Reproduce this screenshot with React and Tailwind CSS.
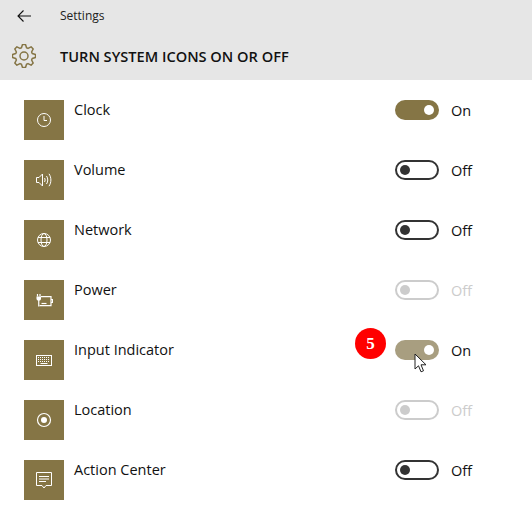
import React from "react";

const ClockIcon = () => (
  <svg width="16" height="16" viewBox="0 0 16 16" fill="none" stroke="#fff" strokeWidth="1">
    <circle cx="8" cy="8" r="6.5" />
    <path d="M8 4v4.5h3" />
  </svg>
);

const VolumeIcon = () => (
  <svg width="16" height="14" viewBox="0 0 16 14" fill="none" stroke="#fff" strokeWidth="1">
    <path d="M0.500 4.500h2.500L6.500 1v12L3 9.500H0.500z" />
    <path d="M8.500 5c.8 1.200.8 2.800 0 4" />
    <path d="M10.500 3c1.700 2.400 1.700 5.600 0 8" />
    <path d="M13 .8c2.500 3.700 2.500 8.700 0 12.400" />
  </svg>
);

const GlobeIcon = () => (
  <svg width="16" height="16" viewBox="0 0 16 16" fill="none" stroke="#fff" strokeWidth="1">
    <circle cx="8" cy="8" r="6.500" />
    <ellipse cx="8" cy="8" rx="3" ry="6.500" />
    <path d="M2 5.500h12M2 10.500h12" />
  </svg>
);

const PowerIcon = () => (
  <svg width="17" height="13" viewBox="0 0 17 13" fill="none" stroke="#fff" strokeWidth="1.200">
    <path d="M5 2.600h10v9H3.500" />
    <path d="M15 5.500h1.500v3H15" />
    <path d="M.5 2.500h4.500v2.300c0 1.200-1 2-2.250 2S.5 6 .5 4.800z" fill="#fff" stroke="none" />
    <path d="M1.500 0v2.500M4 0v2.500M2.750 6v6.500" />
    <path d="M5.500 9.500h5" />
  </svg>
);

const KeyboardIcon = () => (
  <svg width="16" height="11" viewBox="0 0 16 11" fill="none" stroke="#fff" strokeWidth="1">
    <rect x="0.500" y="0.500" width="15" height="10" />
    <path d="M2 2.500h12M2 4.500h12M2 6.500h12" strokeDasharray="1 1" />
    <path d="M4.500 8.500h7" />
  </svg>
);

const LocationIcon = () => (
  <svg width="16" height="16" viewBox="0 0 16 16" fill="none">
    <circle cx="8" cy="8" r="6.500" stroke="#fff" strokeWidth="1.200" />
    <circle cx="8" cy="8" r="3" fill="#fff" />
  </svg>
);

const ActionIcon = () => (
  <svg width="16" height="17" viewBox="0 0 16 17" fill="none" stroke="#fff" strokeWidth="1">
    <path d="M0.500 .5h15v13H10l-2 2.500L6 13.500H0.500z" />
    <path d="M3 4.500h10M3 7h10M3 9.500h7" />
  </svg>
);

// 8 chunky teeth, one every 45deg
const gearPath = () => {
  const pts = [];
  for (let i = 0; i < 8; i++) {
    const a = (i * Math.PI) / 4 - Math.PI / 2;
    const step = [
      [-0.3, 8.6],
      [-0.13, 11.6],
      [0.13, 11.6],
      [0.3, 8.6],
    ];
    step.forEach(([d, r]) => pts.push([12 + r * Math.cos(a + d), 12 + r * Math.sin(a + d)]));
  }
  return "M" + pts.map((p) => p[0].toFixed(2) + " " + p[1].toFixed(2)).join("L") + "Z";
};

const GearIcon = () => (
  <svg width="24" height="24" viewBox="0 0 24 24" fill="none" stroke="#857545" strokeWidth="1.500" strokeLinejoin="round">
    <circle cx="12" cy="12" r="4" />
    <path d={gearPath()} />
  </svg>
);

const Toggle = ({ state }) => {
  if (state === "on") {
    return (
      <div className="flex items-center justify-end w-11 h-5 rounded-full bg-[#857545] pr-[5px]">
        <div className="w-[10px] h-[10px] rounded-full bg-white" />
      </div>
    );
  }
  if (state === "hover") {
    return (
      <div className="flex items-center justify-end w-11 h-5 rounded-full bg-[#a89e80] pr-[5px]">
        <div className="w-[10px] h-[10px] rounded-full bg-white" />
      </div>
    );
  }
  if (state === "disabled") {
    return (
      <div className="flex items-center w-11 h-5 rounded-full border-2 border-[#cccccc] pl-[3px]">
        <div className="w-[10px] h-[10px] rounded-full bg-[#cccccc]" />
      </div>
    );
  }
  return (
    <div className="flex items-center w-11 h-5 rounded-full border-2 border-[#333333] pl-[3px]">
      <div className="w-[10px] h-[10px] rounded-full bg-[#333333]" />
    </div>
  );
};

const rows = [
  { name: "Clock", icon: <ClockIcon />, state: "on", label: "On" },
  { name: "Volume", icon: <VolumeIcon />, state: "off", label: "Off" },
  { name: "Network", icon: <GlobeIcon />, state: "off", label: "Off" },
  { name: "Power", icon: <PowerIcon />, state: "disabled", label: "Off" },
  { name: "Input Indicator", icon: <KeyboardIcon />, state: "hover", label: "On" },
  { name: "Location", icon: <LocationIcon />, state: "disabled", label: "Off" },
  { name: "Action Center", icon: <ActionIcon />, state: "off", label: "Off" },
];

const Row = ({ name, icon, state, label }) => (
  <div className="relative flex h-10">
    <div className="flex items-center justify-center w-10 h-10 bg-[#857545]">{icon}</div>
    <div className="ml-[10px] w-[321px] text-[14.5px] leading-5 text-[#111]">{name}</div>
    <Toggle state={state} />
    <div className={`ml-3 pt-[1px] text-[14.5px] leading-5 ${state === "disabled" ? "text-[#cccccc]" : "text-[#111]"}`}>{label}</div>
    {state === "hover" && (
      <>
        <div className="absolute left-[331px] -top-[12px] flex items-center justify-center w-[31px] h-[31px] rounded-full bg-[#ff0000] text-white font-bold text-[17px] font-['Liberation_Serif',serif]">
          5
        </div>
        <svg className="absolute left-[390px] top-[13px]" width="14" height="20" viewBox="0 0 14 20">
          <path d="M1 1v15l3.500-3.200 2.500 6 2.500-1-2.500-6h5z" fill="#fff" stroke="#222" strokeWidth="1" />
        </svg>
      </>
    )}
  </div>
);

export default function App() {
  return (
    <div className="w-[532px] h-[530px] bg-white font-['Open_Sans',sans-serif] overflow-hidden">
      <div className="h-20 bg-[#e6e6e6]">
        <div className="flex items-center h-8 pl-[17px]">
          <svg width="14" height="12" viewBox="0 0 14 12" fill="none" stroke="#111" strokeWidth="1.100">
            <path d="M14 6H1M6.500 .5 1 6l5.500 5.500" />
          </svg>
          <span className="ml-[29px] text-xs text-[#222]">Settings</span>
        </div>
        <div className="flex items-center h-12 pl-[12px]">
          <GearIcon />
          <h1 className="ml-[24px] pt-[2px] text-[14.6px] font-semibold text-[#111]">TURN SYSTEM ICONS ON OR OFF</h1>
        </div>
      </div>
      <div className="flex flex-col gap-5 pl-6 pt-5">
        {rows.map((r) => (
          <Row key={r.name} {...r} />
        ))}
      </div>
    </div>
  );
}
